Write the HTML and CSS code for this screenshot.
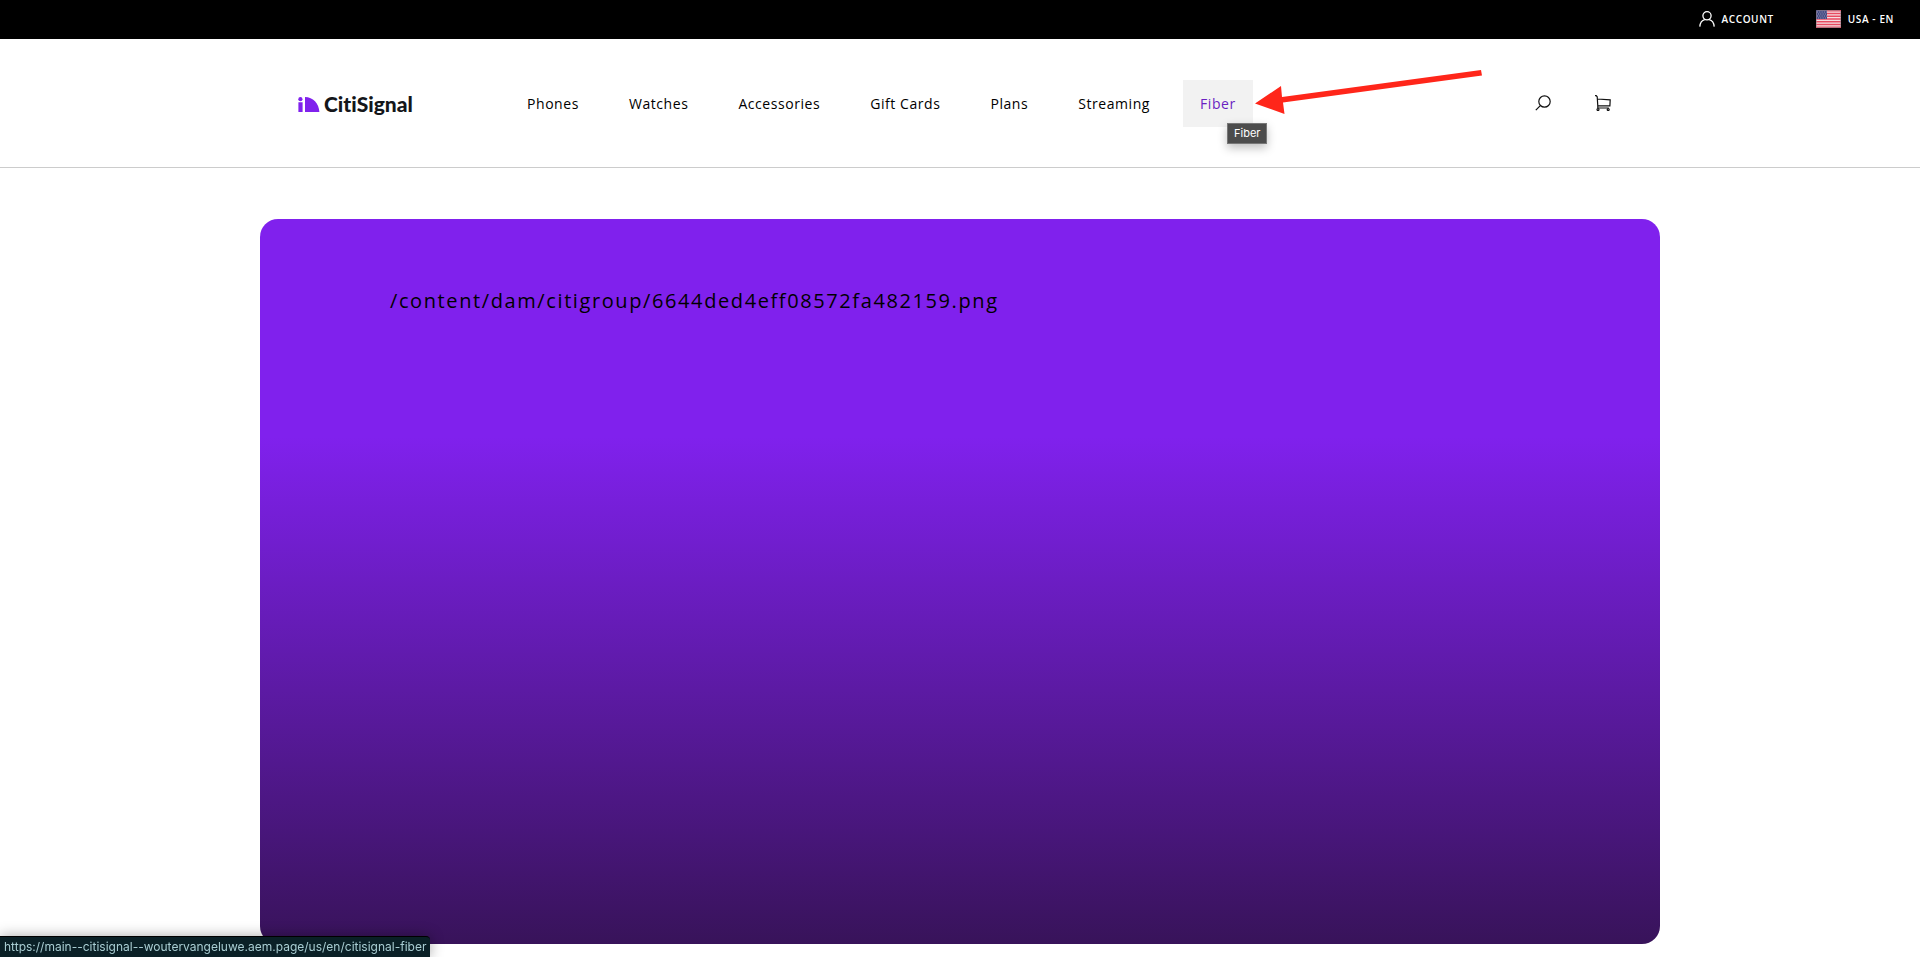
FILE: index.html
```html
<!DOCTYPE html>
<html lang="en">
<head>
<meta charset="utf-8">
<title>CitiSignal</title>
<link rel="stylesheet" href="styles.css">
</head>
<body>
<div class="topbar">
  <a class="topbar-link" href="#account">
    <svg class="account-icon" viewBox="0 0 16 16" aria-hidden="true"><circle cx="8" cy="4.8" r="4.1"/><path d="M.8 15.6c.3-3.8 2.6-6.4 5-7M15.2 15.6c-.3-3.8-2.6-6.4-5-7"/></svg>
    <span>ACCOUNT</span>
  </a>
  <a class="topbar-link" href="#region">
    <svg class="flag" viewBox="0 0 25 18" aria-hidden="true">
      <rect width="25" height="18" rx="1" fill="#f5dfe2"/>
      <path d="M0 .7h25M0 3.5h25M0 6.2h25M0 9h25M0 11.8h25M0 14.5h25M0 17.3h25" stroke="#e84a60" stroke-width="1.4"/>
      <rect width="11" height="9" fill="#454b82"/>
      <path d="M1 2h10M2 4h9M1 6h10M2 8h9" stroke="#aeb1cf" stroke-width=".8" stroke-dasharray="1 1.3"/>
      <rect x=".5" y=".5" width="24" height="17" rx="1" fill="none" stroke="#9a8791" stroke-opacity=".6"/>
    </svg>
    <span>USA - EN</span>
  </a>
</div>
<header class="header">
  <div class="header-inner">
    <a class="brand" href="#home">
      <svg class="brand-mark" viewBox="0 0 22 15" aria-hidden="true"><circle cx="2.4" cy="2.2" r="2.1"/><path d="M.4 5.2h4.2V15H.4zM7 0c8 0 14 6.500 14.400 15H7z"/></svg>
      <span>CitiSignal</span>
    </a>
    <nav class="nav" aria-label="Main">
      <a class="nav-link" href="#phones">Phones</a>
      <a class="nav-link" href="#watches">Watches</a>
      <a class="nav-link" href="#accessories">Accessories</a>
      <a class="nav-link" href="#gift-cards">Gift Cards</a>
      <a class="nav-link" href="#plans">Plans</a>
      <a class="nav-link" href="#streaming">Streaming</a>
      <a class="nav-link nav-active" href="#fiber">Fiber
        <span class="tooltip" role="tooltip">Fiber</span>
        <svg class="arrow" viewBox="0 0 228 46" aria-hidden="true"><path d="M0 33.500 26 16l1 11L226 0l1 5.500L28 32.500l1.500 11.500z"/></svg>
      </a>
    </nav>
    <div class="tools">
      <button class="tool" type="button" aria-label="Search"><svg viewBox="0 0 16 16" aria-hidden="true"><circle cx="9.500" cy="6.500" r="5.700"/><path d="M5.300 10.700.8 15.200"/></svg></button>
      <button class="tool" type="button" aria-label="Cart"><svg viewBox="0 0 16 16" aria-hidden="true"><path d="M0 .6h1.200l1 1.200.6 9.200M2.400 4l12.800.8-.3 6H2.800v2.200h11"/><circle cx="3" cy="14.500" r="1"/><circle cx="13.200" cy="14.500" r="1"/></svg></button>
    </div>
  </div>
</header>
<main class="main">
  <section class="hero">
    <p class="hero-text">/content/dam/citigroup/6644ded4eff08572fa482159.png</p>
  </section>
</main>
<div class="status">https://main--citisignal--woutervangeluwe.aem.page/us/en/citisignal-fiber</div>
</body>
</html>
```
FILE: styles.css
```css
* { box-sizing: border-box; }

body {
  margin: 0;
  background: #fff;
  color: #000;
  font-family: "Open Sans", "Noto Sans", sans-serif;
}

a { color: inherit; text-decoration: none; }

.topbar {
  display: flex;
  justify-content: flex-end;
  align-items: center;
  gap: 42px;
  height: 39px;
  padding: 0 26px 1px;
  background: #000;
  color: #fff;
  font-size: 10px;
  font-weight: 600;
  letter-spacing: .06em;
}

.topbar-link { display: flex; align-items: center; gap: 7px; }

.account-icon {
  width: 16px;
  height: 16px;
  fill: none;
  stroke: #fff;
  stroke-width: 1.3;
}

.flag { width: 25px; height: 18px; }

.header { border-bottom: 1px solid #ccc; }

.header-inner {
  display: flex;
  align-items: center;
  max-width: 1400px;
  height: 128px;
  margin: 0 auto;
  padding: 0 49px 0 38px;
}

.brand {
  display: flex;
  align-items: center;
  gap: 4px;
  width: 212px;
  padding-top: 2px;
  color: #14161a;
  font-family: Lato, sans-serif;
  font-size: 21px;
  font-weight: 900;
  font-variant-ligatures: none;
  line-height: 24px;
}

.brand-mark { width: 22px; height: 15px; fill: #8021ed; }

.nav { display: flex; gap: 16px; }

.nav-link {
  position: relative;
  padding: 12px 17px;
  font-size: 14px;
  line-height: 23px;
  letter-spacing: .04em;
  white-space: nowrap;
}

.nav-active { background: #f2f2f2; color: #6a1fc2; }

.tooltip {
  position: absolute;
  top: 43px;
  left: 44px;
  z-index: 2;
  padding: 0 6px;
  border: 1px solid #777;
  background: #4c4c4c;
  box-shadow: 0 4px 10px rgba(0, 0, 0, .25);
  color: #fff;
  font-family: Inter, sans-serif;
  font-size: 11px;
  line-height: 19px;
  letter-spacing: 0;
}

.arrow {
  position: absolute;
  top: -10px;
  left: 72px;
  width: 228px;
  height: 46px;
  fill: #ff261a;
}

.tools { display: flex; gap: 44px; margin-left: auto; }

.tool {
  width: 16px;
  height: 16px;
  padding: 0;
  border: 0;
  background: none;
}

.tool svg {
  display: block;
  width: 16px;
  height: 16px;
  fill: none;
  stroke: #111;
  stroke-width: 1.2;
}

.main { padding: 51px 48px 13px; }

.hero {
  max-width: 1400px;
  min-height: 725px;
  margin: 0 auto;
  padding: 64px 130px;
  border-radius: 18px;
  background: linear-gradient(#8021ed 30%, #38135a);
}

.hero-text {
  margin: 0;
  font-size: 20px;
  line-height: 36px;
  letter-spacing: .08em;
}

.status {
  position: fixed;
  left: 0;
  bottom: 0;
  padding: 0 4px;
  border-top: 1px solid #000;
  border-radius: 0 4px 0 0;
  background: #0a2026;
  box-shadow: 0 0 14px rgba(0, 0, 0, .35);
  color: #a9cdd2;
  font-family: Inter, sans-serif;
  font-size: 12px;
  line-height: 20px;
}
```
